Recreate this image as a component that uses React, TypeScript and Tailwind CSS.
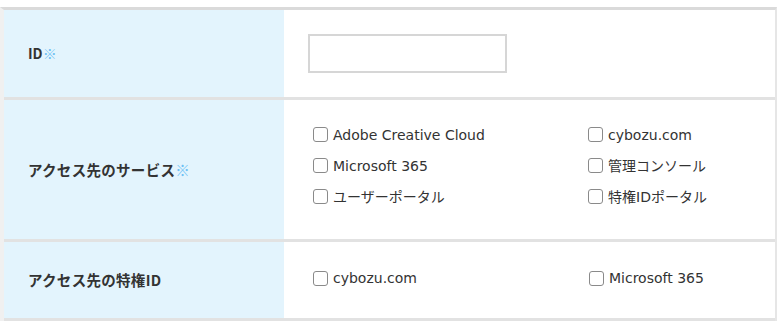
const serviceOptions = [
  'Adobe Creative Cloud',
  'cybozu.com',
  'Microsoft 365',
  '管理コンソール',
  'ユーザーポータル',
  '特権IDポータル',
];

const privilegedOptions = ['cybozu.com', 'Microsoft 365'];

const Check = ({ label }: { label: string }) => (
  <label className="flex items-center gap-[5px] text-[14px] leading-[18px] text-[#333]">
    <span className="inline-block h-[15px] w-[15px] rounded-[3px] border border-[#8a8a8a] bg-white" />
    <span>{label}</span>
  </label>
);

const Required = () => <span className="text-[#6dbff4]">※</span>;

export default function App() {
  return (
    <div
      className="h-[327px] w-[780px] bg-white pt-[7px]"
      style={{ fontFamily: '"DejaVu Sans", "Noto Sans CJK JP", sans-serif' }}
    >
      <div className="w-[777px] border-t-[3px] border-l-4 border-r-2 border-t-[#dadada] border-l-[#f0f0f0] border-r-[#e6e6e6]">
        {/* ID */}
        <div className="flex h-[90px] border-b-[3px] border-[#e2e2e2]">
          <div className="flex w-[280px] items-center bg-[#e3f4fd] pl-6 text-[14px] font-bold text-[#333]">
            <span style={{ fontFamily: '"Noto Sans CJK JP", sans-serif' }}>
              ID
              <Required />
            </span>
          </div>
          <div className="flex flex-1 items-center pl-6">
            <input
              type="text"
              className="h-[39px] w-[199px] border-2 border-[#d6d6d6] bg-white outline-none"
            />
          </div>
        </div>

        {/* アクセス先のサービス */}
        <div className="flex h-[142px] border-b-[3px] border-[#e2e2e2]">
          <div className="flex w-[280px] items-center bg-[#e3f4fd] pl-6 text-[14.5px] font-bold text-[#333]">
            <span className="tracking-[0.3px]" style={{ fontFamily: '"Noto Sans CJK JP", sans-serif' }}>
              アクセス先のサービス
              <Required />
            </span>
          </div>
          <div className="flex flex-1 items-center pl-[29px]">
            <div className="grid grid-cols-[275px_1fr] gap-y-[13px] pb-2">
              {serviceOptions.map((o) => (
                <Check key={o} label={o} />
              ))}
            </div>
          </div>
        </div>

        {/* アクセス先の特権ID */}
        <div className="flex h-[79px] border-b-[3px] border-[#e2e2e2]">
          <div className="flex w-[280px] items-center bg-[#e3f4fd] pl-6 text-[14.5px] font-bold text-[#333]">
            <span className="tracking-[0.3px]" style={{ fontFamily: '"Noto Sans CJK JP", sans-serif' }}>
              アクセス先の特権ID
            </span>
          </div>
          <div className="flex flex-1 items-center pl-[29px]">
            <div className="grid grid-cols-[276px_1fr] pb-1">
              {privilegedOptions.map((o) => (
                <Check key={o} label={o} />
              ))}
            </div>
          </div>
        </div>
      </div>
    </div>
  );
}
